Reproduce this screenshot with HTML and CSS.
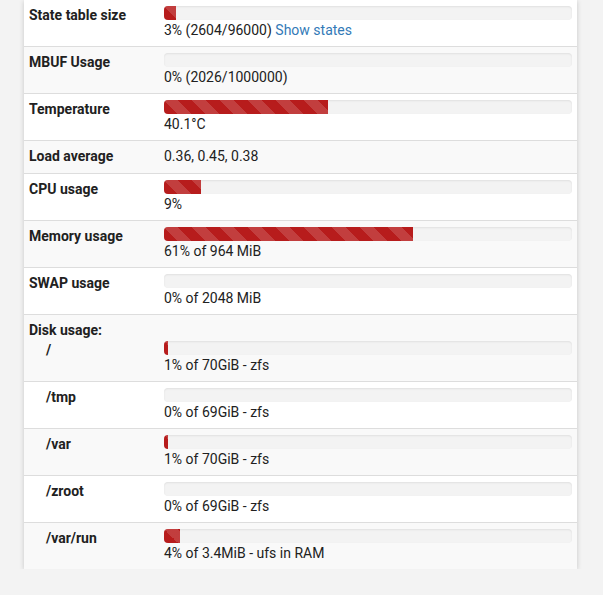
FILE: index.html
```html
<!DOCTYPE html>
<html lang="en">
<head>
  <meta charset="UTF-8" />
  <title>System Information</title>
  <link rel="stylesheet" href="styles.css">
</head>
<body>
  <div class="panel">
    <table class="sysinfo">
      <colgroup>
        <col class="col-label">
        <col>
      </colgroup>
      <tbody>
        <tr>
          <th>State table size</th>
          <td>
            <div class="progress"><div class="bar" style="width: 3%"></div></div>
            3% (2604/96000) <a href="#">Show states</a>
          </td>
        </tr>
        <tr>
          <th>MBUF Usage</th>
          <td>
            <div class="progress"><div class="bar" style="width: 0%"></div></div>
            0% (2026/1000000)
          </td>
        </tr>
        <tr>
          <th>Temperature</th>
          <td>
            <div class="progress"><div class="bar" style="width: 40.1%"></div></div>
            40.1&deg;C
          </td>
        </tr>
        <tr class="plain">
          <th>Load average</th>
          <td>0.36, 0.45, 0.38</td>
        </tr>
        <tr>
          <th>CPU usage</th>
          <td>
            <div class="progress"><div class="bar" style="width: 9%"></div></div>
            9%
          </td>
        </tr>
        <tr>
          <th>Memory usage</th>
          <td>
            <div class="progress"><div class="bar" style="width: 61%"></div></div>
            61% of 964 MiB
          </td>
        </tr>
        <tr>
          <th>SWAP usage</th>
          <td>
            <div class="progress"><div class="bar" style="width: 0%"></div></div>
            0% of 2048 MiB
          </td>
        </tr>
        <!-- Disk usage: first mount shares the row with the heading -->
        <tr>
          <th>
            Disk usage:
            <div class="mount">/</div>
          </th>
          <td>
            <div class="spacer"></div>
            <div class="progress"><div class="bar" style="width: 1%"></div></div>
            1% of 70GiB - zfs
          </td>
        </tr>
        <tr>
          <th><div class="mount">/tmp</div></th>
          <td>
            <div class="progress"><div class="bar" style="width: 0%"></div></div>
            0% of 69GiB - zfs
          </td>
        </tr>
        <tr>
          <th><div class="mount">/var</div></th>
          <td>
            <div class="progress"><div class="bar" style="width: 1%"></div></div>
            1% of 70GiB - zfs
          </td>
        </tr>
        <tr>
          <th><div class="mount">/zroot</div></th>
          <td>
            <div class="progress"><div class="bar" style="width: 0%"></div></div>
            0% of 69GiB - zfs
          </td>
        </tr>
        <tr>
          <th><div class="mount">/var/run</div></th>
          <td>
            <div class="progress"><div class="bar" style="width: 4%"></div></div>
            4% of 3.4MiB - ufs in RAM
          </td>
        </tr>
      </tbody>
    </table>
  </div>
</body>
</html>
```

FILE: styles.css
```css
/* Page */
body {
  margin: 0;
  background-color: #f3f3f3;
  font-family: Roboto, "Liberation Sans", sans-serif;
  font-size: 14px;
  line-height: 20px;
  color: #212121;
}
a {
  color: #337ab7;
  text-decoration: none;
}
/* Widget panel */
.panel {
  width: 553px;
  margin-left: 24px;
  background-color: #ffffff;
  box-shadow: 0 1px 5px rgba(0, 0, 0, 0.18);
}
.sysinfo {
  width: 100%;
  border-collapse: collapse;
  table-layout: fixed;
}
.col-label {
  width: 135px;
}
.sysinfo th,
.sysinfo td {
  padding: 5px 5px 6px;
  text-align: left;
  vertical-align: top;
  border-top: 1px solid #dddddd;
}
.sysinfo tr.plain th,
.sysinfo tr.plain td {
  padding-bottom: 7px;
}
.sysinfo tr:first-child th,
.sysinfo tr:first-child td {
  border-top: none;
}
.sysinfo th {
  font-weight: bold;
}
.sysinfo tbody tr:nth-child(even) {
  background-color: #f9f9f9;
}
.mount {
  padding-left: 17px;
}
.spacer {
  height: 20px;
}
/* Progress bars */
.progress {
  height: 14px;
  margin-top: 1px;
  background-color: #f3f3f3;
  border-radius: 4px;
  box-shadow: inset 0 1px 2px rgba(0, 0, 0, 0.08);
  overflow: hidden;
}
.bar {
  height: 100%;
  background-color: #b71c1c;
  background-image: linear-gradient(45deg,
    rgba(255, 255, 255, 0.15) 25%, transparent 25%,
    transparent 50%, rgba(255, 255, 255, 0.15) 50%,
    rgba(255, 255, 255, 0.15) 75%, transparent 75%, transparent);
  background-size: 28px 28px;
}
```
